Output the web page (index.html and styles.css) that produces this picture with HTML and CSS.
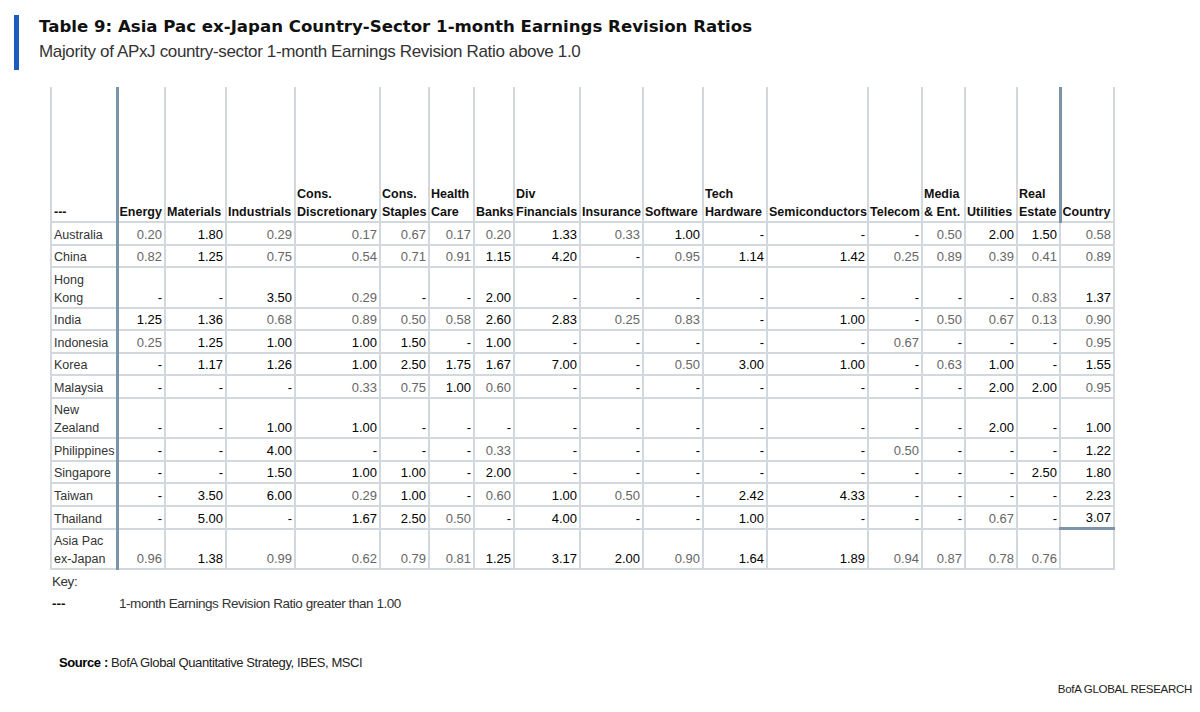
FILE: index.html
```html
<!DOCTYPE html>
<html>
<head>
<meta charset="utf-8">
<link rel="stylesheet" href="styles.css">
</head>
<body>
<div class="page">
  <div class="titlebar">
    <div class="title">Table 9: Asia Pac ex-Japan Country-Sector 1-month Earnings Revision Ratios</div>
    <div class="subtitle">Majority of APxJ country-sector 1-month Earnings Revision Ratio above 1.0</div>
  </div>
  <table class="grid">
    <colgroup>
      <col style="width:66px"><col style="width:48px"><col style="width:61px"><col style="width:69px"><col style="width:85px"><col style="width:49px"><col style="width:45px"><col style="width:40px"><col style="width:66px"><col style="width:63px"><col style="width:60px"><col style="width:64px"><col style="width:101px"><col style="width:54px"><col style="width:43px"><col style="width:52px"><col style="width:43px"><col style="width:54px">
    </colgroup>
    <thead>
      <tr class="head">
        <th class="lbl">---</th><th>Energy</th><th>Materials</th><th>Industrials</th><th>Cons.<br>Discretionary</th><th>Cons.<br>Staples</th><th>Health<br>Care</th><th>Banks</th><th>Div<br>Financials</th><th>Insurance</th><th>Software</th><th>Tech<br>Hardware</th><th>Semiconductors</th><th>Telecom</th><th>Media<br>&amp; Ent.</th><th>Utilities</th><th>Real<br>Estate</th><th class="ctry">Country</th>
      </tr>
    </thead>
    <tbody>
      <tr><td class="lbl">Australia</td><td>0.20</td><td class="h">1.80</td><td>0.29</td><td>0.17</td><td>0.67</td><td>0.17</td><td>0.20</td><td class="h">1.33</td><td>0.33</td><td class="h">1.00</td><td class="h">-</td><td class="h">-</td><td class="h">-</td><td>0.50</td><td class="h">2.00</td><td class="h">1.50</td><td>0.58</td></tr>
      <tr><td class="lbl">China</td><td>0.82</td><td class="h">1.25</td><td>0.75</td><td>0.54</td><td>0.71</td><td>0.91</td><td class="h">1.15</td><td class="h">4.20</td><td class="h">-</td><td>0.95</td><td class="h">1.14</td><td class="h">1.42</td><td>0.25</td><td>0.89</td><td>0.39</td><td>0.41</td><td>0.89</td></tr>
      <tr><td class="lbl">Hong<br>Kong</td><td class="h">-</td><td class="h">-</td><td class="h">3.50</td><td>0.29</td><td class="h">-</td><td class="h">-</td><td class="h">2.00</td><td class="h">-</td><td class="h">-</td><td class="h">-</td><td class="h">-</td><td class="h">-</td><td class="h">-</td><td class="h">-</td><td class="h">-</td><td>0.83</td><td class="h">1.37</td></tr>
      <tr><td class="lbl">India</td><td class="h">1.25</td><td class="h">1.36</td><td>0.68</td><td>0.89</td><td>0.50</td><td>0.58</td><td class="h">2.60</td><td class="h">2.83</td><td>0.25</td><td>0.83</td><td class="h">-</td><td class="h">1.00</td><td class="h">-</td><td>0.50</td><td>0.67</td><td>0.13</td><td>0.90</td></tr>
      <tr><td class="lbl">Indonesia</td><td>0.25</td><td class="h">1.25</td><td class="h">1.00</td><td class="h">1.00</td><td class="h">1.50</td><td class="h">-</td><td class="h">1.00</td><td class="h">-</td><td class="h">-</td><td class="h">-</td><td class="h">-</td><td class="h">-</td><td>0.67</td><td class="h">-</td><td class="h">-</td><td class="h">-</td><td>0.95</td></tr>
      <tr><td class="lbl">Korea</td><td class="h">-</td><td class="h">1.17</td><td class="h">1.26</td><td class="h">1.00</td><td class="h">2.50</td><td class="h">1.75</td><td class="h">1.67</td><td class="h">7.00</td><td class="h">-</td><td>0.50</td><td class="h">3.00</td><td class="h">1.00</td><td class="h">-</td><td>0.63</td><td class="h">1.00</td><td class="h">-</td><td class="h">1.55</td></tr>
      <tr><td class="lbl">Malaysia</td><td class="h">-</td><td class="h">-</td><td class="h">-</td><td>0.33</td><td>0.75</td><td class="h">1.00</td><td>0.60</td><td class="h">-</td><td class="h">-</td><td class="h">-</td><td class="h">-</td><td class="h">-</td><td class="h">-</td><td class="h">-</td><td class="h">2.00</td><td class="h">2.00</td><td>0.95</td></tr>
      <tr><td class="lbl">New<br>Zealand</td><td class="h">-</td><td class="h">-</td><td class="h">1.00</td><td class="h">1.00</td><td class="h">-</td><td class="h">-</td><td class="h">-</td><td class="h">-</td><td class="h">-</td><td class="h">-</td><td class="h">-</td><td class="h">-</td><td class="h">-</td><td class="h">-</td><td class="h">2.00</td><td class="h">-</td><td class="h">1.00</td></tr>
      <tr><td class="lbl">Philippines</td><td class="h">-</td><td class="h">-</td><td class="h">4.00</td><td class="h">-</td><td class="h">-</td><td class="h">-</td><td>0.33</td><td class="h">-</td><td class="h">-</td><td class="h">-</td><td class="h">-</td><td class="h">-</td><td>0.50</td><td class="h">-</td><td class="h">-</td><td class="h">-</td><td class="h">1.22</td></tr>
      <tr><td class="lbl">Singapore</td><td class="h">-</td><td class="h">-</td><td class="h">1.50</td><td class="h">1.00</td><td class="h">1.00</td><td class="h">-</td><td class="h">2.00</td><td class="h">-</td><td class="h">-</td><td class="h">-</td><td class="h">-</td><td class="h">-</td><td class="h">-</td><td class="h">-</td><td class="h">-</td><td class="h">2.50</td><td class="h">1.80</td></tr>
      <tr><td class="lbl">Taiwan</td><td class="h">-</td><td class="h">3.50</td><td class="h">6.00</td><td>0.29</td><td class="h">1.00</td><td class="h">-</td><td>0.60</td><td class="h">1.00</td><td>0.50</td><td class="h">-</td><td class="h">2.42</td><td class="h">4.33</td><td class="h">-</td><td class="h">-</td><td class="h">-</td><td class="h">-</td><td class="h">2.23</td></tr>
      <tr><td class="lbl">Thailand</td><td class="h">-</td><td class="h">5.00</td><td class="h">-</td><td class="h">1.67</td><td class="h">2.50</td><td>0.50</td><td class="h">-</td><td class="h">4.00</td><td class="h">-</td><td class="h">-</td><td class="h">1.00</td><td class="h">-</td><td class="h">-</td><td class="h">-</td><td>0.67</td><td class="h">-</td><td class="h">3.07</td></tr>
      <tr><td class="lbl">Asia Pac<br>ex-Japan</td><td>0.96</td><td class="h">1.38</td><td>0.99</td><td>0.62</td><td>0.79</td><td>0.81</td><td class="h">1.25</td><td class="h">3.17</td><td class="h">2.00</td><td>0.90</td><td class="h">1.64</td><td class="h">1.89</td><td>0.94</td><td>0.87</td><td>0.78</td><td>0.76</td><td class="blank"></td></tr>
    </tbody>
  </table>
  <div class="key">
    <div class="key-title">Key:</div>
    <div class="key-row"><span class="key-mark">---</span><span class="key-text">1-month Earnings Revision Ratio greater than 1.00</span></div>
  </div>
  <div class="source"><b>Source :</b> BofA Global Quantitative Strategy, IBES, MSCI</div>
  <div class="brand">BofA GLOBAL RESEARCH</div>
</div>
</body>
</html>
```

FILE: styles.css
```css
* { box-sizing: border-box; }
html, body { margin: 0; padding: 0; background: #fff; }
body {
  font-family: "Liberation Sans", Arial, sans-serif;
  color: #222;
}
.page {
  width: 1200px;
  height: 712px;
  padding-top: 15px;
  overflow: hidden;
}
.titlebar {
  margin-left: 14px;
  border-left: 5px solid #1c5cbf;
  padding: 1px 0 7px 20px;
}
.title {
  font-family: "DejaVu Sans", "Liberation Sans", sans-serif;
  font-size: 16.6px;
  font-weight: 700;
  line-height: 22px;
  color: #111;
}
.subtitle {
  margin-top: 3px;
  font-size: 17px;
  letter-spacing: -0.35px;
  line-height: 22px;
  color: #333;
}
.grid {
  margin: 17px 0 0 50px;
  border-collapse: collapse;
  table-layout: fixed;
  width: 1063px;
}
.grid th, .grid td {
  border: 2px solid #d3d8df;
}
.grid thead th {
  border-top: none;
  height: 135px;
  padding: 0 0 0 1px;
  font-size: 12.5px;
  font-weight: 700;
  line-height: 18px;
  text-align: left;
  vertical-align: bottom;
  color: #111;
  white-space: nowrap;
}
.grid td {
  padding: 2.5px 2px 0 1px;
  font-size: 13px;
  line-height: 18px;
  text-align: right;
  vertical-align: bottom;
  color: #666;
  white-space: nowrap;
}
.grid td.h { color: #000; }
.grid .lbl {
  border-right: 3px solid #7c94aa;
  text-align: left;
  color: #333;
  padding-left: 2px;
}
.grid td.lbl { font-size: 12.5px; }
.grid thead th.lbl { color: #111; }
.grid thead th.ctry { border-left: 3px solid #7c94aa; }
.grid td.blank { border-top: 3px solid #7c94aa; }
.key {
  margin: 1px 0 0 52px;
  font-size: 13.5px;
  letter-spacing: -0.45px;
  line-height: 22px;
  color: #333;
}
.key-row { display: flex; }
.key-mark { width: 67px; font-weight: 700; color: #111; letter-spacing: 0; }
.source {
  margin: 38px 0 0 59px;
  font-size: 13px;
  letter-spacing: -0.4px;
  line-height: 20px;
  color: #222;
}
.source b { color: #000; }
.brand {
  margin-top: 6px;
  padding-right: 8px;
  text-align: right;
  font-size: 11.5px;
  letter-spacing: -0.3px;
  line-height: 20px;
  color: #222;
}
```
